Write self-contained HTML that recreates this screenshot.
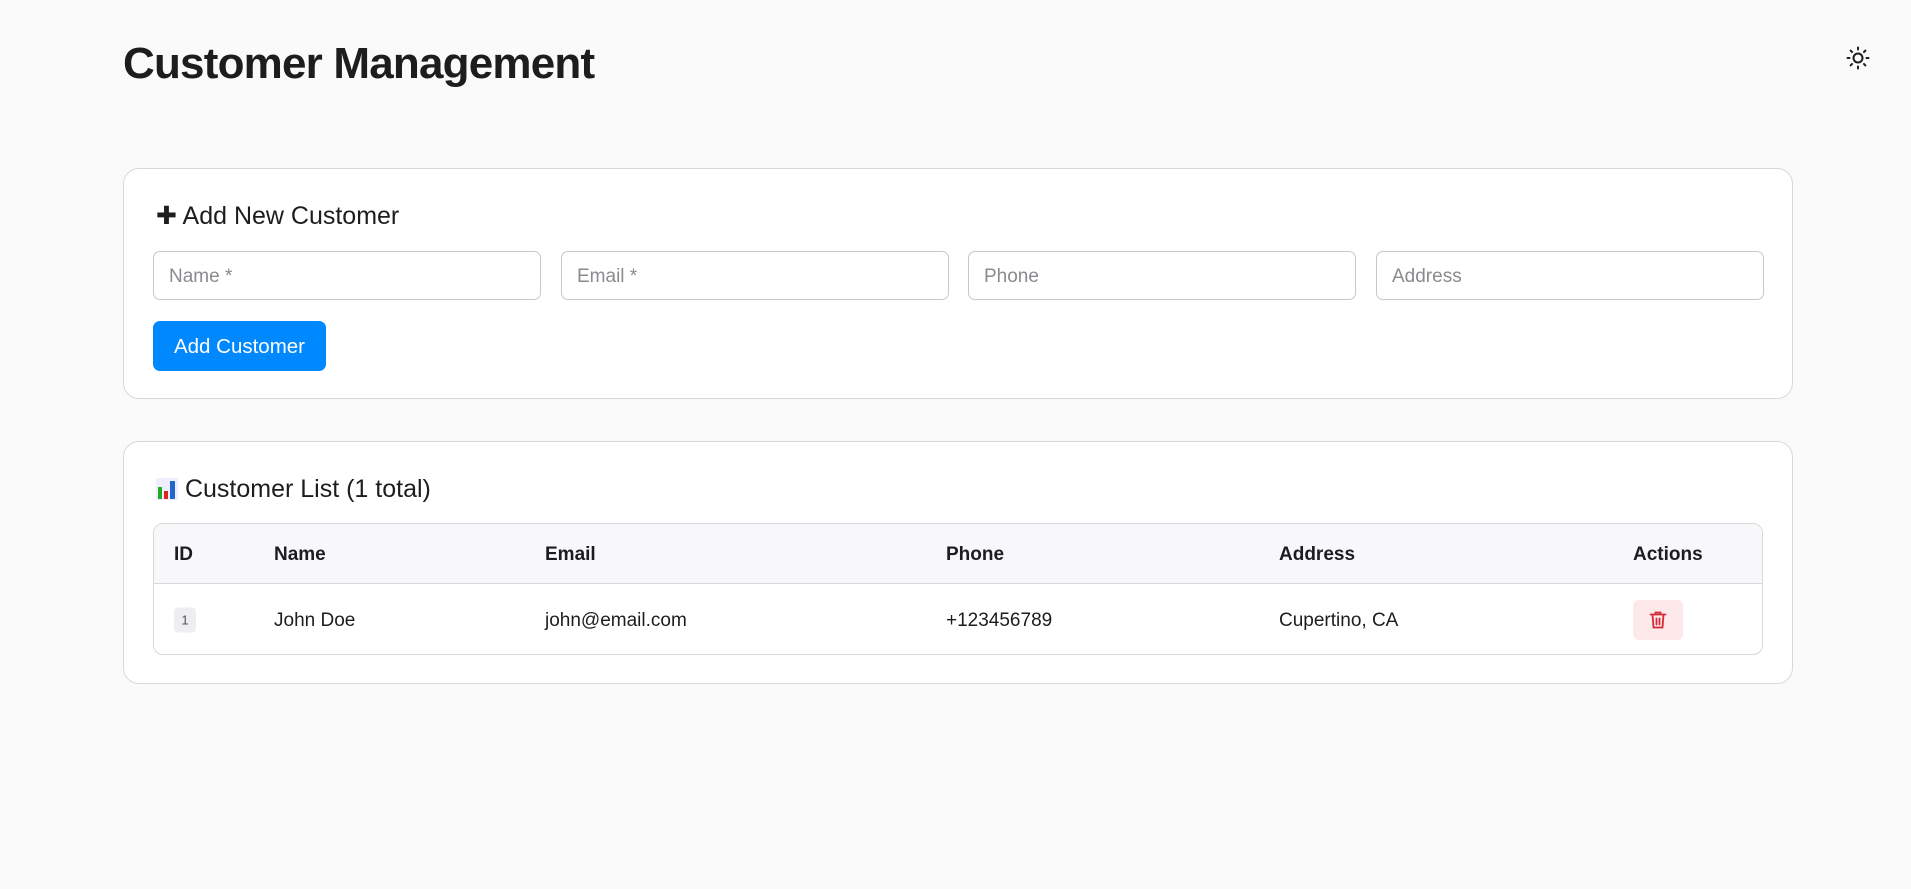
<!DOCTYPE html>
<html><head><meta charset="utf-8"><style>
*{box-sizing:border-box;margin:0;padding:0}
body{width:1911px;height:889px;background:#fafafa;font-family:"Liberation Sans",sans-serif;color:#1d1d1f;position:relative;overflow:hidden}
h1{position:absolute;left:123px;top:39px;font-size:44px;font-weight:700;letter-spacing:-0.8px}
.sun{position:absolute;left:1846px;top:46px}
.card{position:absolute;left:123px;width:1670px;background:#fff;border:1px solid #d8d8dc;border-radius:16px}
.h2{position:absolute;left:32px;font-size:25px;color:#1d1d1f}
input{position:absolute;top:82px;height:49px;width:388px;border:1px solid #c8c8cc;border-radius:7px;font-size:19px;padding-left:15px;padding-top:2px;font-family:"Liberation Sans",sans-serif;background:#fff}
input::placeholder{color:#8a8a8f}
.btn{position:absolute;left:29px;top:152px;width:173px;height:50px;background:#0088ff;color:#fff;border-radius:7px;font-size:20.5px;line-height:52px;text-align:center}
.tbl{position:absolute;left:29px;top:81px;width:1610px;height:132px;border:1px solid #d8d8dc;border-radius:10px;overflow:hidden}
.thead{height:60px;background:#f8f8fa;border-bottom:1px solid #d8d8dc;position:relative}
.row{position:relative;height:71px}
.c{position:absolute;font-size:19px;top:50%;transform:translateY(-45%)}
.thead .c{font-weight:700}
.badge{background:#eeeef0;color:#555;font-size:13px;width:22px;height:25px;line-height:25px;text-align:center;border-radius:4px;transform:translateY(-50%)}
.del{width:50px;height:40px;background:#fde8ea;border-radius:6px;display:flex;align-items:center;justify-content:center;transform:translateY(-50%)}
</style></head><body>
<h1>Customer Management</h1>
<svg class="sun" width="24" height="24" viewBox="0 0 24 24" fill="none" stroke="#1d1d1f" stroke-width="2" stroke-linecap="round"><circle cx="12" cy="12" r="4.5"/><path d="M12 1.5v2M12 20.5v2M1.5 12h2M20.5 12h2M4.6 4.6l1.4 1.4M18 18l1.4 1.4M4.6 19.4L6 18M18 6l1.4-1.4"/></svg>
<div class="card" style="top:168px;height:231px">
 <div class="h2" style="top:32px">✚ Add New Customer</div>
 <input style="left:29px" placeholder="Name *">
 <input style="left:437px" placeholder="Email *">
 <input style="left:844px" placeholder="Phone">
 <input style="left:1252px" placeholder="Address">
 <div class="btn">Add Customer</div>
</div>
<div class="card" style="top:441px;height:243px">
 <div class="h2" style="top:33px"><svg width="22" height="22" viewBox="0 0 22 22" style="vertical-align:-3px"><rect x="0" y="0" width="22" height="22" fill="#eef"/><rect x="2" y="9" width="4" height="12" fill="#2a2"/><rect x="8" y="13" width="4" height="8" fill="#d22"/><rect x="14" y="3" width="5" height="18" fill="#26c"/></svg> Customer List (1 total)</div>
 <div class="tbl">
  <div class="thead">
   <span class="c" style="left:20px">ID</span><span class="c" style="left:120px">Name</span><span class="c" style="left:391px">Email</span><span class="c" style="left:792px">Phone</span><span class="c" style="left:1125px">Address</span><span class="c" style="left:1479px">Actions</span>
  </div>
  <div class="row">
   <span class="c badge" style="left:20px">1</span><span class="c" style="left:120px">John Doe</span><span class="c" style="left:391px">john@email.com</span><span class="c" style="left:792px">+123456789</span><span class="c" style="left:1125px">Cupertino, CA</span>
   <span class="c del" style="left:1479px"><svg width="18" height="20" viewBox="0 0 18 20" fill="none" stroke="#d42a3a" stroke-width="1.8" stroke-linecap="round"><path d="M1.5 4.5h15M6.5 4.5V2.5h5v2M3.5 4.5l1 13h9l1-13M7.5 8.5v6M10.5 8.5v6"/></svg></span>
  </div>
 </div>
</div>
</body></html>
